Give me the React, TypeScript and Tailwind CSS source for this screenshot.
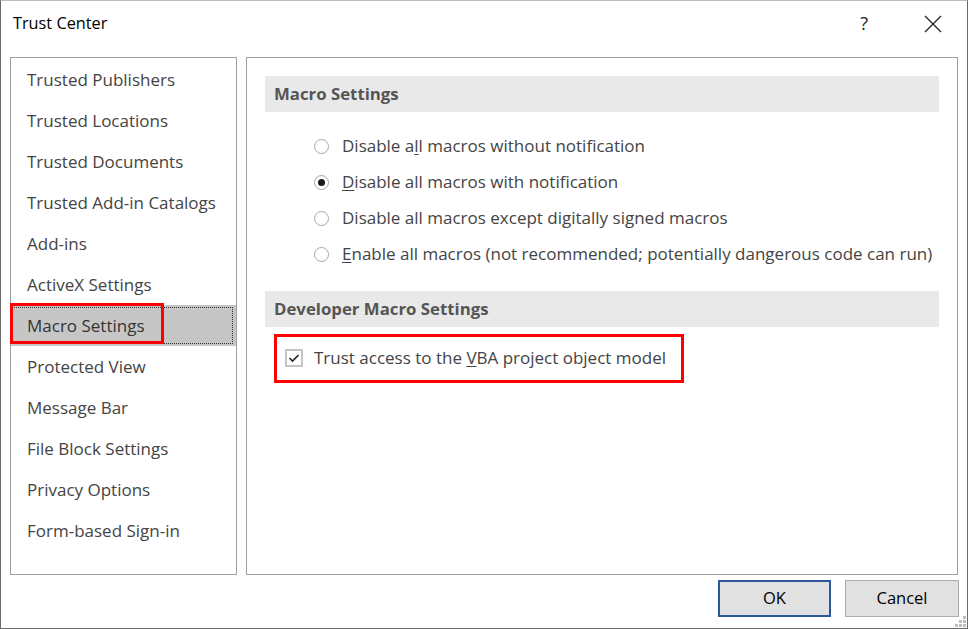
import type { ReactNode } from "react";

const menuItems = [
  "Trusted Publishers",
  "Trusted Locations",
  "Trusted Documents",
  "Trusted Add-in Catalogs",
  "Add-ins",
  "ActiveX Settings",
  "Macro Settings",
  "Protected View",
  "Message Bar",
  "File Block Settings",
  "Privacy Options",
  "Form-based Sign-in",
];

function SectionHeader({ children }: { children: ReactNode }) {
  return (
    <div className="flex h-[36px] items-center bg-[#e9e9e9] pl-[9px] text-[16.8px] font-bold text-[#555]">
      {children}
    </div>
  );
}

function Radio({ checked, children }: { checked?: boolean; children: ReactNode }) {
  return (
    <div className="flex h-[36px] items-center pl-[49px]">
      <span className="flex h-[15px] w-[15px] items-center justify-center rounded-full border border-[#a6a6a6] bg-white">
        {checked && <span className="h-[7px] w-[7px] rounded-full bg-[#1a1a1a]" />}
      </span>
      <span className="ml-[13px] text-[#444]">{children}</span>
    </div>
  );
}

function SidebarItem({ label, selected }: { label: string; selected: boolean }) {
  if (selected) {
    return (
      <div className="relative flex h-[41px] items-center bg-[#c6c6c6] pl-[16px] pr-[3px]">
        <div className="absolute inset-y-[2px] left-0 right-[3px] border border-dotted border-[#333]" />
        <span className="text-[#333]">{label}</span>
        <div className="absolute left-[-1px] top-[-2px] h-[41px] w-[154px] border-[3px] border-[#ff0000]" />
      </div>
    );
  }
  return (
    <div className="flex h-[41px] items-center pl-[16px] text-[#444]">{label}</div>
  );
}

export default function App() {
  return (
    <div
      className="flex h-[629px] w-[968px] flex-col border border-[#6b6b6b] border-t-[#bdbdbd] bg-white text-[17px]"
      style={{ fontFamily: '"Open Sans", "Noto Sans", sans-serif' }}
    >
      {/* title bar */}
      <div className="flex h-[56px] shrink-0 items-start pt-[10px]">
        <span className="ml-[12px] text-[16.3px] text-black">Trust Center</span>
        <span className="ml-auto mt-[-1px] text-[18px] text-[#222]">?</span>
        <svg className="ml-[56px] mr-[25px] mt-[4px]" width="18" height="18" viewBox="0 0 18 18">
          <path d="M1 1L17 17M17 1L1 17" stroke="#222" strokeWidth="1.3" />
        </svg>
      </div>

      {/* body */}
      <div className="flex h-[518px] shrink-0 pl-[9px]">
        <div className="w-[227px] border border-[#a0a0a0] pt-[1px] text-[17px]">
          {menuItems.map((item) => (
            <SidebarItem key={item} label={item} selected={item === "Macro Settings"} />
          ))}
        </div>

        <div className="ml-[9px] w-[712px] border border-[#a0a0a0] px-[18px] pt-[18px]">
          <SectionHeader>Macro Settings</SectionHeader>
          <div className="mt-[16px]">
            <Radio>
              Disable a<u className="underline-offset-2">l</u>l macros without notification
            </Radio>
            <Radio checked>
              <u className="underline-offset-2">D</u>isable all macros with notification
            </Radio>
            <Radio>
              Disable all macros except di<u className="underline-offset-2">g</u>itally signed macros
            </Radio>
            <Radio>
              <u className="underline-offset-2">E</u>nable all macros (not recommended; potentially dangerous code can run)
            </Radio>
          </div>
          <div className="mt-[19px]">
            <SectionHeader>Developer Macro Settings</SectionHeader>
          </div>
          <div className="relative mt-[7px] ml-[9px] flex h-[49px] w-[410px] items-center border-[3px] border-[#ff0000] pb-[2px] pl-[8px]">
            <span className="flex h-[18px] w-[18px] items-center justify-center border-2 border-[#c4c4c4] bg-white">
              <svg width="12" height="10" viewBox="0 0 12 10">
                <path d="M1.5 5L4.5 8L10.5 2" fill="none" stroke="#222" strokeWidth="1.6" />
              </svg>
            </span>
            <span className="ml-[11px] text-[#444]">
              Trust access to the <u className="underline-offset-2">V</u>BA project object model
            </span>
          </div>
        </div>
      </div>

      {/* footer */}
      <div className="relative flex flex-1 items-start justify-end pr-[8px] pt-[5px]">
        <button className="flex h-[37px] w-[113px] items-center justify-center border-2 border-[#2b579a] bg-[#e1e1e1] text-[16.5px] text-black">
          OK
        </button>
        <button className="ml-[14px] flex h-[37px] w-[114px] items-center justify-center border border-[#adadad] bg-[#e1e1e1] text-[16.5px] text-black">
          Cancel
        </button>
        <svg className="absolute bottom-[1px] right-[1px]" width="11" height="11" viewBox="0 0 11 11">
          <rect x="8" y="0" width="3" height="3" fill="#bdbdbd" />
          <rect x="4" y="4" width="3" height="3" fill="#bdbdbd" />
          <rect x="8" y="4" width="3" height="3" fill="#bdbdbd" />
          <rect x="0" y="8" width="3" height="3" fill="#bdbdbd" />
          <rect x="4" y="8" width="3" height="3" fill="#bdbdbd" />
          <rect x="8" y="8" width="3" height="3" fill="#bdbdbd" />
        </svg>
      </div>
    </div>
  );
}
